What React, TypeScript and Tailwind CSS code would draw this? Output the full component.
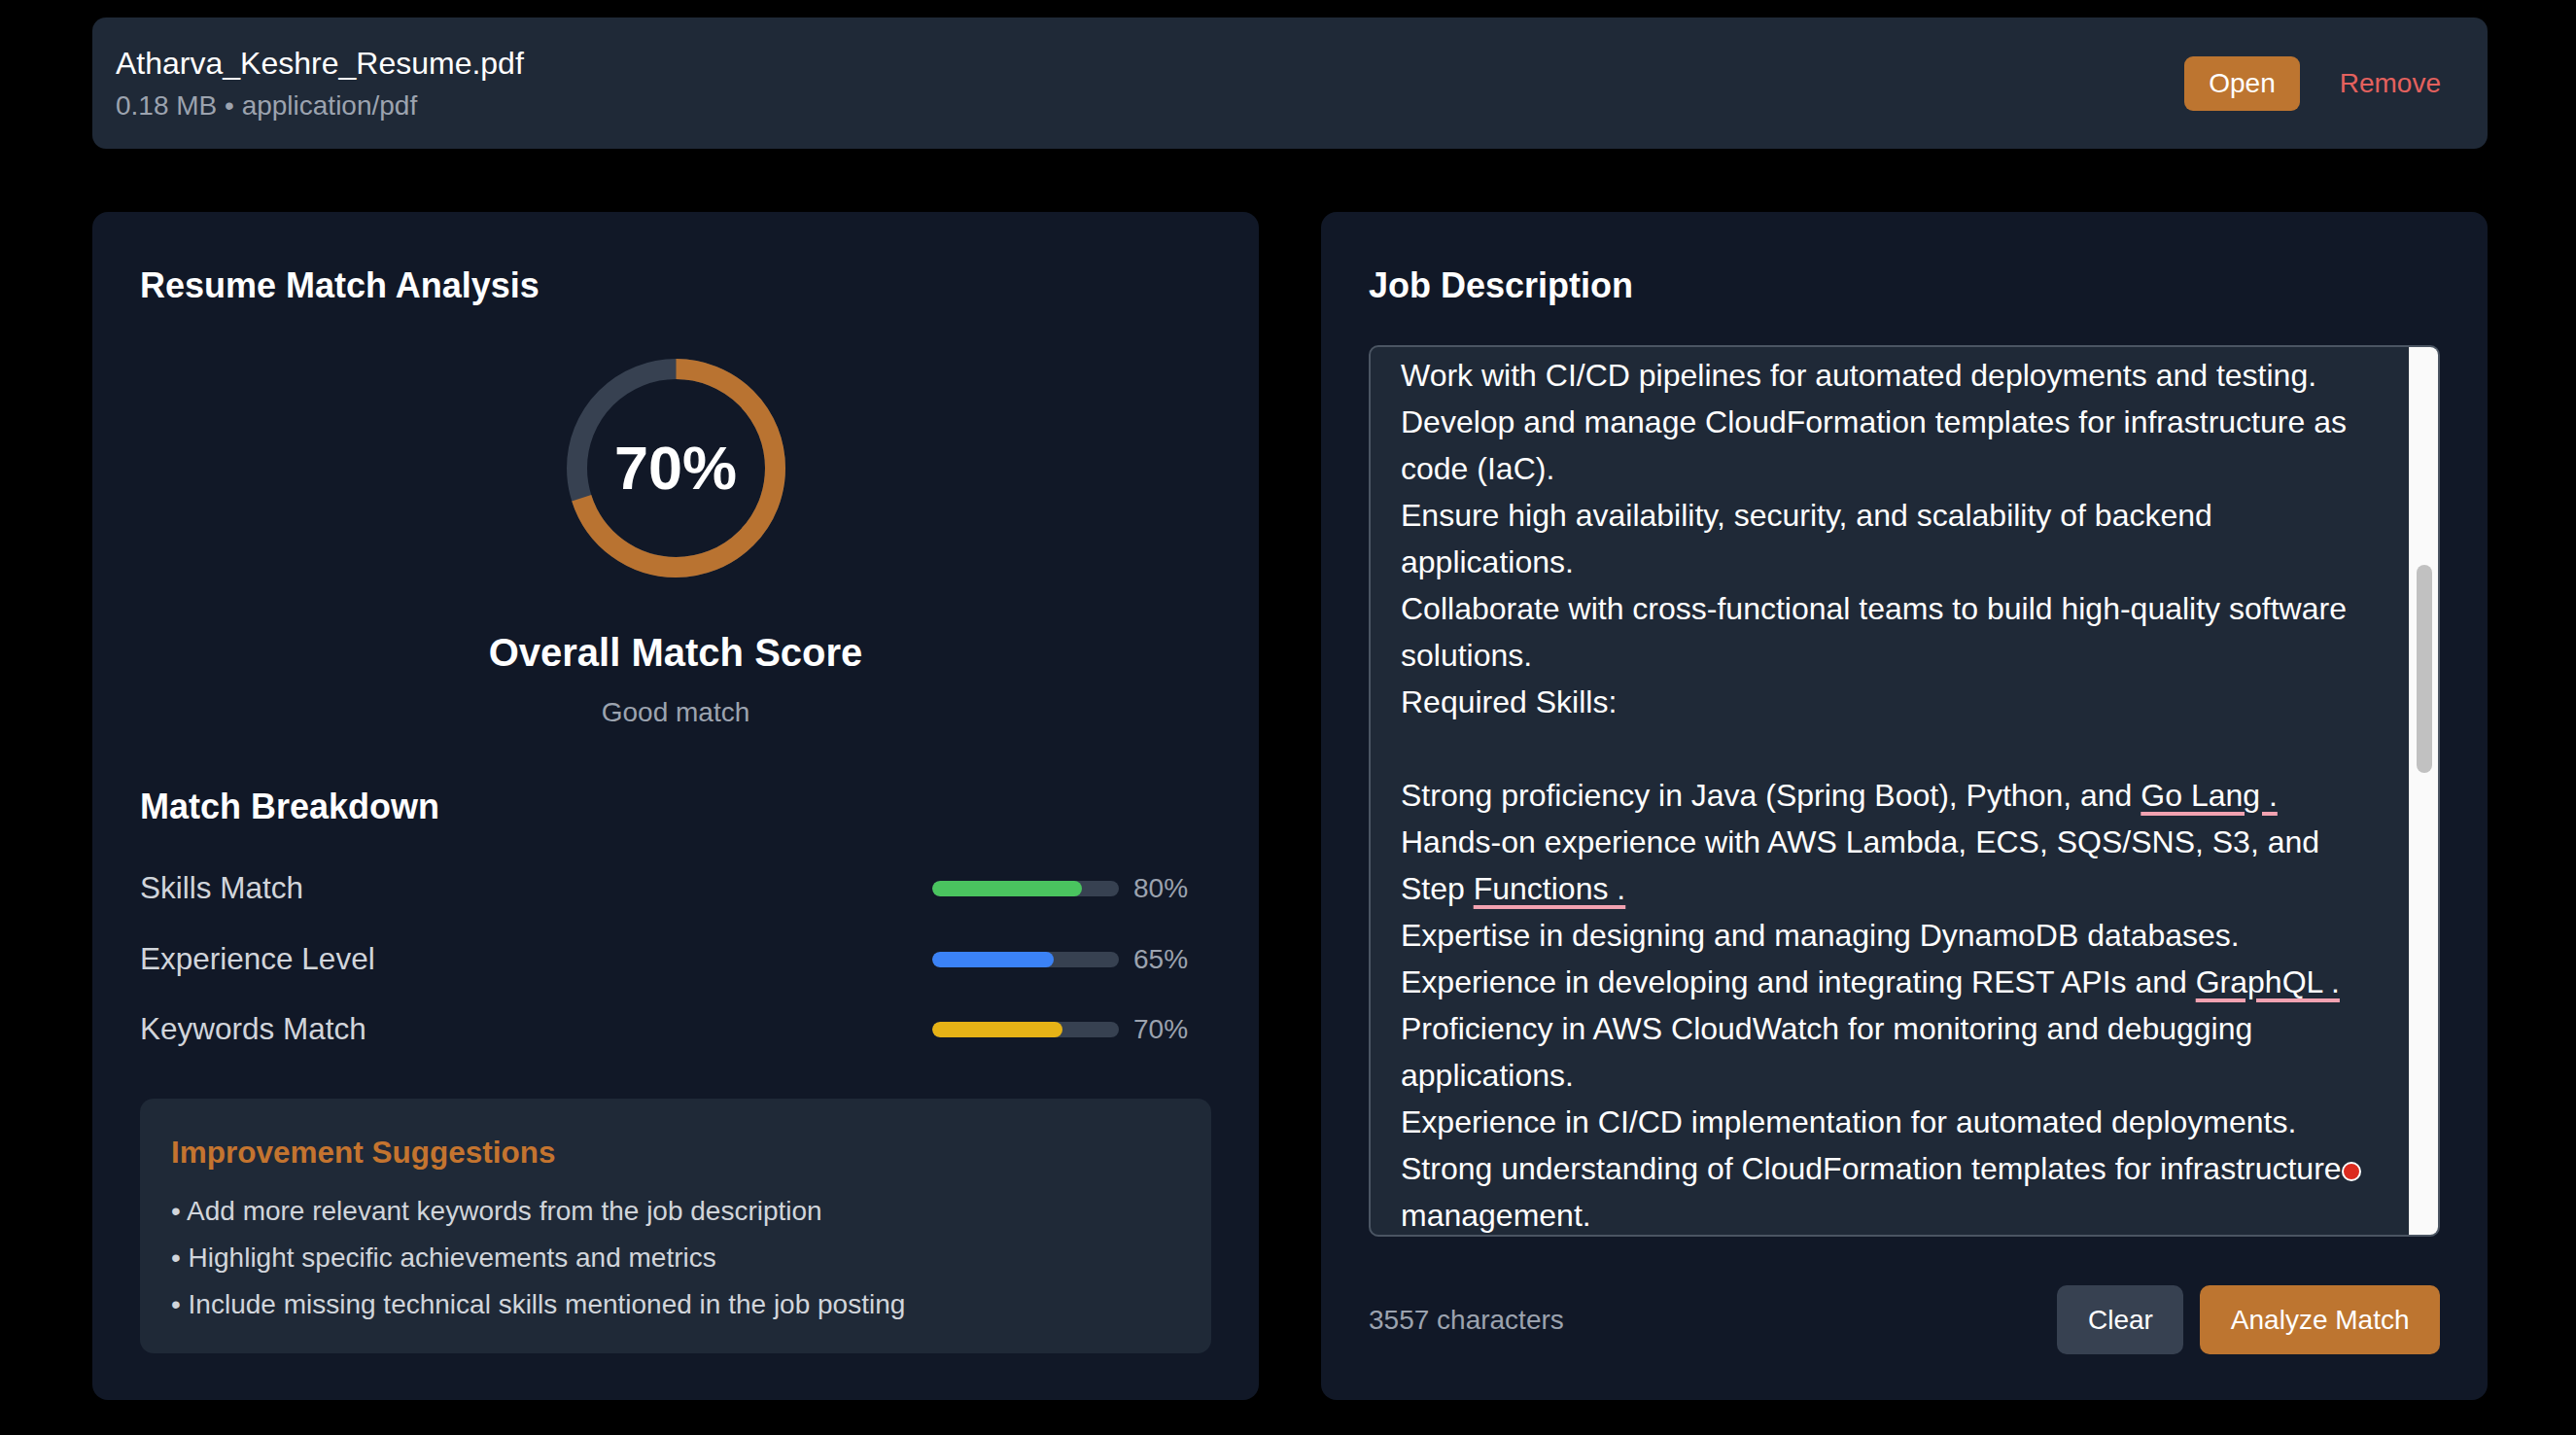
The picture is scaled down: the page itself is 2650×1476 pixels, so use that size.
import React from 'react';

function FileCard() {
  return (
    <div className="flex h-[135px] items-center justify-between rounded-[14px] bg-[#1f2937] pl-[24px] pr-[23px]">
      <div>
        <p className="text-[32px] leading-[44px] text-white">Atharva_Keshre_Resume.pdf</p>
        <p className="pt-[2px] text-[28px] leading-[40px] text-[#9ca3af]">0.18 MB • application/pdf</p>
      </div>
      <div className="flex items-center gap-[16px]">
        <button className="h-[56px] rounded-[9px] bg-[#bd7530] px-[25px] text-[28px] text-white">
          Open
        </button>
        <button className="h-[56px] px-[25px] text-[28px] text-[#e4615e]">Remove</button>
      </div>
    </div>
  );
}

function ScoreRing({ value }: { value: number }) {
  const r = 102;
  const c = 2 * Math.PI * r;
  return (
    <div className="relative h-[225px] w-[225px]">
      <svg width="225" height="225" viewBox="0 0 225 225" className="-rotate-90">
        <circle cx="112.5" cy="112.5" r={r} fill="none" stroke="#374151" strokeWidth="21" />
        <circle
          cx="112.5"
          cy="112.5"
          r={r}
          fill="none"
          stroke="#b97331"
          strokeWidth="21"
          strokeDasharray={`${(c * value) / 100} ${c}`}
        />
      </svg>
      <div className="absolute inset-0 flex items-center justify-center">
        <span className="text-[63px] font-bold leading-none text-white">{value}%</span>
      </div>
    </div>
  );
}

function AnalysisPanel() {
  const rows = [
    { label: 'Skills Match', value: 80, color: 'bg-[#4ac45f]' },
    { label: 'Experience Level', value: 65, color: 'bg-[#3b82f6]' },
    { label: 'Keywords Match', value: 70, color: 'bg-[#e6b216]' },
  ];
  const tips = [
    'Add more relevant keywords from the job description',
    'Highlight specific achievements and metrics',
    'Include missing technical skills mentioned in the job posting',
  ];

  return (
    <section className="rounded-[16px] bg-[#111827] px-[49px] pb-[47px] pt-[51px]">
      <h2 className="text-[36px] font-bold leading-[49px] text-white">Resume Match Analysis</h2>

      <div className="mt-[51px] flex flex-col items-center">
        <ScoreRing value={70} />
        <h3 className="mt-[49px] text-[40px] font-bold leading-[56px] text-white">Overall Match Score</h3>
        <p className="mt-[13px] text-[28px] leading-[42px] text-[#9ca3af]">Good match</p>
      </div>

      <h2 className="mt-[51px] text-[36px] font-bold leading-[49px] text-white">Match Breakdown</h2>
      <div className="mt-[38px] flex flex-col gap-[28.5px]">
        {rows.map((row) => (
          <div key={row.label} className="flex h-[44px] items-center justify-between">
            <span className="text-[31.5px] text-[#d1d5db]">{row.label}</span>
            <div className="flex items-center">
              <div className="h-[16px] w-[192px] overflow-hidden rounded-full bg-[#374151]">
                <div className={`h-full rounded-full ${row.color}`} style={{ width: `${row.value}%` }} />
              </div>
              <span className="ml-[15px] w-[80px] text-[28px] text-[#9ca3af]">{row.value}%</span>
            </div>
          </div>
        ))}
      </div>

      <div className="mt-[49px] rounded-[14px] bg-[#1f2937] px-[32px] pb-[29px] pt-[33px]">
        <h4 className="text-[31.5px] font-bold leading-[44px] text-[#c4742f]">Improvement Suggestions</h4>
        <ul className="mt-[18px] flex flex-col gap-[6px] text-[28px] leading-[42px] text-[#d1d5db]">
          {tips.map((tip) => (
            <li key={tip}>• {tip}</li>
          ))}
        </ul>
      </div>
    </section>
  );
}

function Flag({ children }: { children: React.ReactNode }) {
  return (
    <span className="underline decoration-[#f2a2b1] decoration-[4px] underline-offset-[6px]">
      {children}
    </span>
  );
}

function JobPanel() {
  const lines: React.ReactNode[] = [
    'Work with CI/CD pipelines for automated deployments and testing.',
    'Develop and manage CloudFormation templates for infrastructure as',
    'code (IaC).',
    'Ensure high availability, security, and scalability of backend',
    'applications.',
    'Collaborate with cross-functional teams to build high-quality software',
    'solutions.',
    'Required Skills:',
    '\u00a0',
    <>
      Strong proficiency in Java (Spring Boot), Python, and <Flag>Go Lang .</Flag>
    </>,
    'Hands-on experience with AWS Lambda, ECS, SQS/SNS, S3, and',
    <>
      Step <Flag>Functions .</Flag>
    </>,
    'Expertise in designing and managing DynamoDB databases.',
    <>
      Experience in developing and integrating REST APIs and <Flag>GraphQL .</Flag>
    </>,
    'Proficiency in AWS CloudWatch for monitoring and debugging',
    'applications.',
    'Experience in CI/CD implementation for automated deployments.',
    <>
      Strong understanding of CloudFormation templates for infrastructure
      <span className="inline-block h-[20px] w-[20px] rounded-full border-2 border-white bg-[#dc2b1f] align-middle" />
    </>,
    'management.',
  ];

  return (
    <section className="flex flex-col rounded-[16px] bg-[#111827] px-[49px] pb-[47px] pt-[51px]">
      <h2 className="text-[36px] font-bold leading-[49px] text-white">Job Description</h2>

      <div className="mt-[37px] flex h-[917px] overflow-hidden rounded-[10px] border-2 border-[#4b5563] bg-[#1f2937]">
        <div className="flex-1 overflow-hidden pl-[31px] pt-[5px] text-[32px] leading-[48px] text-white">
          {lines.map((line, i) => (
            <div key={i} className="whitespace-nowrap">
              {line}
            </div>
          ))}
        </div>
        <div className="w-[30px] shrink-0 border-l border-[#ececec] bg-[#fafafa] pt-[224px]">
          <div className="mx-auto h-[214px] w-[16px] rounded-full bg-[#c1c1c1]" />
        </div>
      </div>

      <div className="mt-[50px] flex items-center justify-between">
        <span className="text-[28px] text-[#9ca3af]">3557 characters</span>
        <div className="flex gap-[17px]">
          <button className="h-[71px] rounded-[10px] bg-[#374151] px-[31.5px] text-[28px] text-white">
            Clear
          </button>
          <button className="h-[71px] rounded-[10px] bg-[#bd7530] px-[31.5px] text-[28px] text-white">
            Analyze Match
          </button>
        </div>
      </div>
    </section>
  );
}

export default function App() {
  return (
    <div className="min-h-screen bg-black pl-[95px] pr-[91px] pt-[18px] font-['Liberation_Sans',Arial,sans-serif] text-white">
      <FileCard />
      <div className="mt-[65px] grid grid-cols-2 gap-[64px]">
        <AnalysisPanel />
        <JobPanel />
      </div>
    </div>
  );
}
